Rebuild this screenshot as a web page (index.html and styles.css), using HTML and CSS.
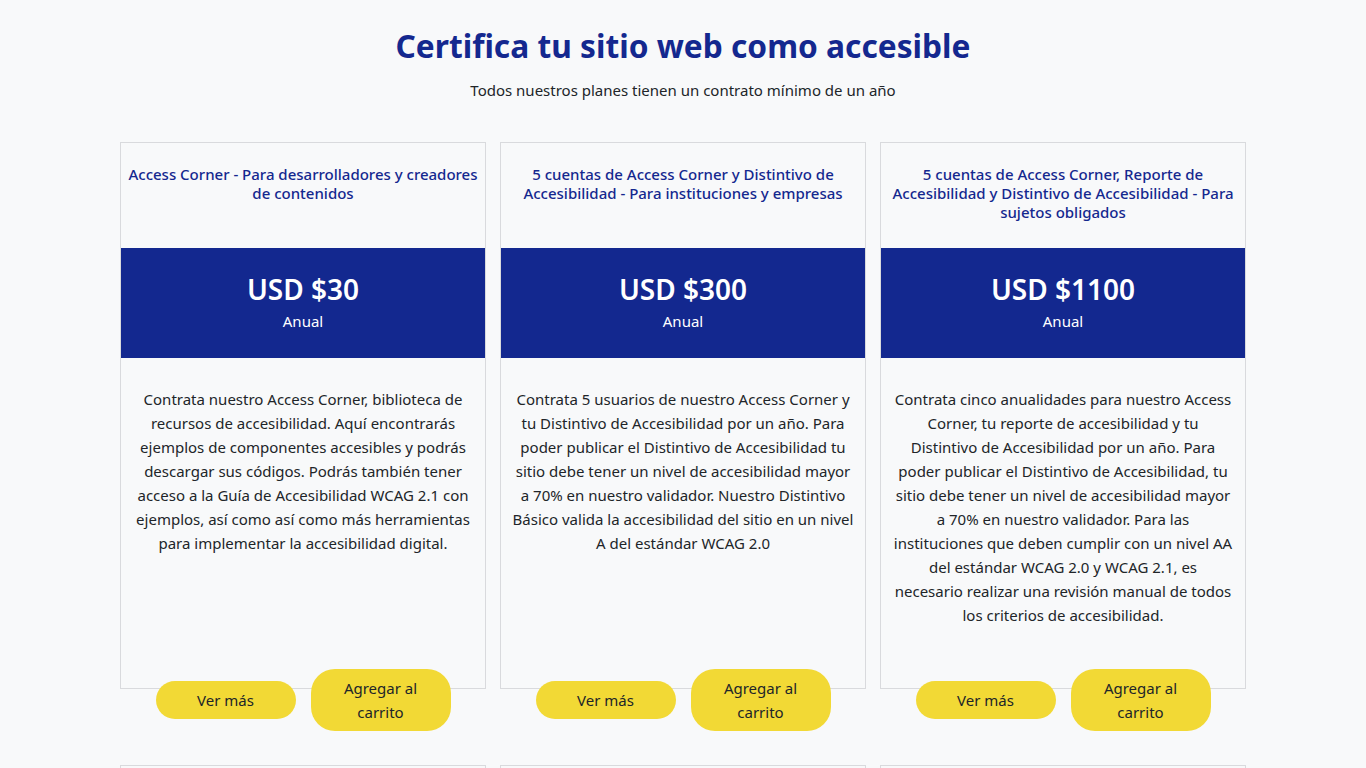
FILE: index.html
```html
<!DOCTYPE html>
<html lang="es">
<head>
  <meta charset="UTF-8">
  <meta name="viewport" content="width=device-width, initial-scale=1.0">
  <title>Planes de accesibilidad</title>
  <link rel="stylesheet" href="styles.css">
</head>
<body>
  <header class="intro">
    <h1>Certifica tu sitio web como accesible</h1>
    <p>Todos nuestros planes tienen un contrato mínimo de un año</p>
  </header>

  <main class="planes">
    <article class="plan">
      <h2 class="plan-titulo">Access Corner - Para desarrolladores y creadores de contenidos</h2>
      <div class="plan-precio">
        <span class="monto">USD $30</span>
        <span class="periodo">Anual</span>
      </div>
      <p class="plan-desc">Contrata nuestro Access Corner, biblioteca de recursos de accesibilidad. Aquí encontrarás ejemplos de componentes accesibles y podrás descargar sus códigos. Podrás también tener acceso a la Guía de Accesibilidad WCAG 2.1 con ejemplos, así como así como más herramientas para implementar la accesibilidad digital.</p>
      <div class="plan-acciones">
        <button class="btn">Ver más</button>
        <button class="btn btn-carrito">Agregar al carrito</button>
      </div>
    </article>

    <article class="plan">
      <h2 class="plan-titulo">5 cuentas de Access Corner y Distintivo de Accesibilidad - Para instituciones y empresas</h2>
      <div class="plan-precio">
        <span class="monto">USD $300</span>
        <span class="periodo">Anual</span>
      </div>
      <p class="plan-desc">Contrata 5 usuarios de nuestro Access Corner y tu Distintivo de Accesibilidad por un año. Para poder publicar el Distintivo de Accesibilidad tu sitio debe tener un nivel de accesibilidad mayor a 70% en nuestro validador. Nuestro Distintivo Básico valida la accesibilidad del sitio en un nivel A del estándar WCAG 2.0</p>
      <div class="plan-acciones">
        <button class="btn">Ver más</button>
        <button class="btn btn-carrito">Agregar al carrito</button>
      </div>
    </article>

    <article class="plan">
      <h2 class="plan-titulo">5 cuentas de Access Corner, Reporte de Accesibilidad y Distintivo de Accesibilidad - Para sujetos obligados</h2>
      <div class="plan-precio">
        <span class="monto">USD $1100</span>
        <span class="periodo">Anual</span>
      </div>
      <p class="plan-desc">Contrata cinco anualidades para nuestro Access Corner, tu reporte de accesibilidad y tu Distintivo&nbsp;de Accesibilidad por un año. Para poder publicar el Distintivo de Accesibilidad, tu sitio debe tener un nivel de accesibilidad mayor a 70% en nuestro validador. Para las instituciones que deben cumplir con un nivel AA del estándar WCAG 2.0 y WCAG 2.1, es necesario&nbsp;realizar una revisión manual de todos los criterios de accesibilidad.</p>
      <div class="plan-acciones">
        <button class="btn">Ver más</button>
        <button class="btn btn-carrito">Agregar al carrito</button>
      </div>
    </article>

    <article class="plan"></article>
    <article class="plan"></article>
    <article class="plan"></article>
  </main>
</body>
</html>
```

FILE: styles.css
```css
body {
  font-family: "Noto Sans", "Open Sans", sans-serif;
  background-color: #f8f9fa;
  color: #212529;
  margin: 0;
}
.intro {
  text-align: center;
  padding-top: 24px;
}
.intro h1 {
  color: #14288f;
  font-size: 31.7px;
  font-weight: 700;
  margin: 0;
  line-height: 44px;
}
.intro p {
  font-size: 15px;
  margin: 11px 0 0;
  line-height: 22px;
}
.planes {
  display: grid;
  grid-template-columns: repeat(3, 366px);
  justify-content: center;
  column-gap: 14px;
  row-gap: 76px;
  margin-top: 41px;
}
.plan {
  height: 547px;
  box-sizing: border-box;
  border: 1px solid #d9dadd;
  display: flex;
  flex-direction: column;
  text-align: center;
}
.plan-titulo {
  height: 105px;
  box-sizing: border-box;
  margin: 0;
  padding: 22px 6px 0;
  color: #14288f;
  font-size: 15px;
  font-weight: 500;
  line-height: 19px;
}
.plan-precio {
  background-color: #13288f;
  color: white;
  height: 110px;
  display: flex;
  flex-direction: column;
  align-items: center;
  justify-content: center;
}
.monto {
  font-size: 28px;
  font-weight: 600;
  line-height: 40px;
}
.periodo {
  font-size: 15px;
  line-height: 24px;
  margin-bottom: 4px;
}
.plan-desc {
  flex: 1;
  margin: 0;
  padding: 29px 10px 0;
  font-size: 15px;
  line-height: 24px;
}
.plan-acciones {
  display: flex;
  justify-content: center;
  align-items: center;
  gap: 15px;
  height: 62px;
  margin-bottom: -43px;
}
.btn {
  font-family: inherit;
  width: 140px;
  padding: 7px 10px;
  border: none;
  border-radius: 20px;
  background-color: #f2d935;
  color: #212529;
  font-size: 15px;
  line-height: 24px;
  cursor: pointer;
}
.btn:hover {
  background-color: #e8cd20;
}
.btn-carrito {
  border-radius: 24px;
}
```
